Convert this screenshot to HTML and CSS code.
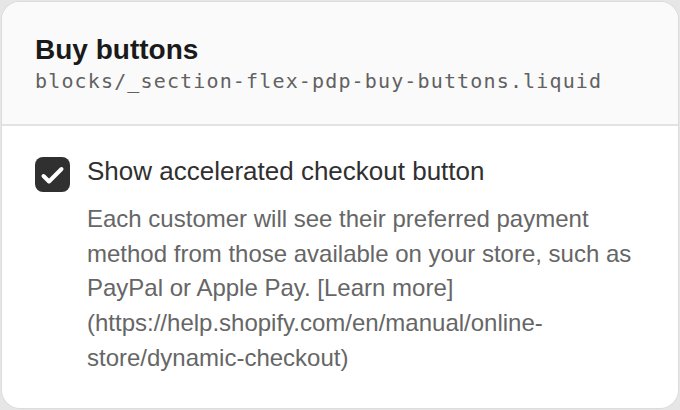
FILE: index.html
```html
<!DOCTYPE html>
<html>
<head>
<meta charset="utf-8">
<link rel="stylesheet" href="styles.css">
</head>
<body>
<div class="card">
  <div class="card-header">
    <div class="title">Buy buttons</div>
    <div class="path">blocks/_section-flex-pdp-buy-buttons.liquid</div>
  </div>
  <div class="card-body">
    <div class="option">
      <span class="checkbox">
        <svg class="check" viewBox="0 0 35 35" width="35" height="35"><path d="M8.5 19l5.5 5.5 12.5-12.5" fill="none" stroke="#fff" stroke-width="4" stroke-linecap="round" stroke-linejoin="round"/></svg>
      </span>
      <div class="option-text">
        <div class="label">Show accelerated checkout button</div>
        <div class="desc">Each customer will see their preferred payment method from those available on your store, such as PayPal or Apple Pay. [Learn more](https://help.shopify.com/en/manual/online-store/dynamic-checkout)</div>
      </div>
    </div>
  </div>
</div>
</body>
</html>
```
FILE: styles.css
```css
* { box-sizing: border-box; }
html, body { margin: 0; padding: 0; }
body {
  background: #e6e6e6;
  width: 680px;
  height: 410px;
  padding: 2px;
  font-family: "Liberation Sans", Arial, sans-serif;
}
.card {
  width: 676px;
  height: 406px;
  background: #fff;
  border-radius: 18px;
  overflow: hidden;
  box-shadow: 0 0 0 1px #dcdcdc;
}
.card-header {
  background: #fafafa;
  border-bottom: 2px solid #e3e3e3;
  height: 124px;
  padding: 33px 33px 0;
}
.title {
  font-size: 28px;
  font-weight: 700;
  color: #1a1a1a;
  line-height: 30px;
}
.path {
  font-family: "DejaVu Sans Mono", monospace;
  font-size: 20px;
  letter-spacing: 1.15px;
  color: #616161;
  line-height: 24px;
  margin-top: 4px;
}
.card-body {
  padding: 30px 33px 0;
}
.option {
  display: flex;
  gap: 17px;
}
.checkbox {
  flex: none;
  width: 35px;
  height: 35px;
  border-radius: 8px;
  background: #303030;
  display: block;
  margin-top: 1px;
}
.check {
  display: block;
}
.label {
  font-size: 26px;
  color: #303030;
  line-height: 32px;
  margin-top: -1px;
}
.desc {
  font-size: 24px;
  color: #666666;
  line-height: 34.7px;
  margin-top: 15px;
}
```
